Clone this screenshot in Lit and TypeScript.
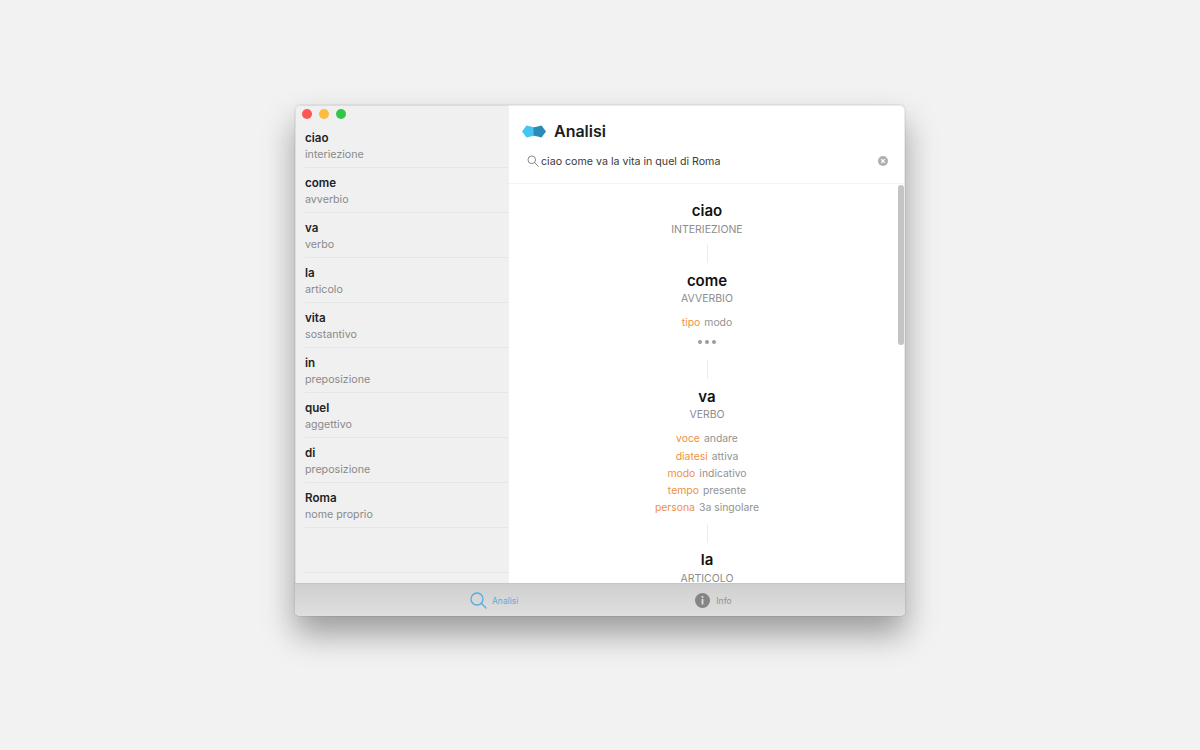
import { LitElement, html, css, svg } from "lit";
import { customElement } from "lit/decorators.js";

const words: [string, string][] = [
  ["ciao", "interiezione"],
  ["come", "avverbio"],
  ["va", "verbo"],
  ["la", "articolo"],
  ["vita", "sostantivo"],
  ["in", "preposizione"],
  ["quel", "aggettivo"],
  ["di", "preposizione"],
  ["Roma", "nome proprio"],
];

interface Entry { word: string; type: string; attrs: [string, string][]; more?: boolean; }
const entries: Entry[] = [
  { word: "ciao", type: "INTERIEZIONE", attrs: [] },
  { word: "come", type: "AVVERBIO", attrs: [["tipo", "modo"]], more: true },
  {
    word: "va",
    type: "VERBO",
    attrs: [
      ["voce", "andare"],
      ["diatesi", "attiva"],
      ["modo", "indicativo"],
      ["tempo", "presente"],
      ["persona", "3a singolare"],
    ],
  },
  { word: "la", type: "ARTICOLO", attrs: [] },
];

@customElement("app-root")
export class AppRoot extends LitElement {
  static styles = css`
    :host {
      display: block;
      width: 1200px;
      height: 750px;
      background: #f2f2f2;
      font-family: Inter, "Liberation Sans", sans-serif;
      overflow: hidden;
      padding-top: 105px;
      box-sizing: border-box;
    }
    .window {
      position: relative;
      width: 610px;
      height: 511px;
      margin: 0 auto;
      border-radius: 5px;
      overflow: hidden;
      display: flex;
      flex-direction: column;
      background: #fff;
    }
    .shadow {
      position: absolute;
      left: 295px;
      top: 105px;
      width: 610px;
      height: 511px;
      border-radius: 5px;
      box-shadow: 0 18px 32px rgba(0, 0, 0, 0.36), 0 0 1px rgba(0, 0, 0, 0.5);
    }
    .frame {
      position: absolute;
      inset: 0;
      border-radius: 5px;
      box-shadow: inset 0 0 0 1px rgba(0, 0, 0, 0.08);
      pointer-events: none;
    }
    .body { flex: 1; display: flex; min-height: 0; }
    .side {
      width: 214px;
      background: #f0f0f0;
      flex: none;
      padding-left: 10px;
      box-sizing: border-box;
      overflow: hidden;
    }
    .lights { display: flex; gap: 7px; padding-top: 4px; height: 14px; margin-left: -3px; }
    .lights i { width: 10px; height: 10px; border-radius: 50%; display: block; }
    .r { background: #fc5753; } .y { background: #fdbc40; } .g { background: #33c748; }
    .row {
      height: 45px;
      box-sizing: border-box;
      border-bottom: 1px solid #e6e6e6;
      padding-top: 7px;
    }
    .row b { display: block; font-size: 11.6px; line-height: 16px; font-weight: 600; color: #222; }
    .row span { display: block; font-size: 10.7px; line-height: 16px; margin-top: 1px; color: #8a8a8a; }
    .main { flex: 1; display: flex; flex-direction: column; position: relative; min-width: 0; }
    .head { height: 79px; flex: none; box-sizing: border-box; border-bottom: 1px solid #f3f3f3; padding: 16px 17px 0 13px; }
    .title { display: flex; align-items: center; gap: 8px; height: 20px; }
    .title svg { display: block; }
    .title h1 { margin: 0; font-size: 16px; line-height: 20px; font-weight: 600; color: #1c1c1c; }
    .search { display: flex; align-items: center; margin-top: 11px; padding-left: 5px; height: 18px; font-size: 10.65px; color: #3a3a3a; }
    .search span { flex: 1; margin-left: 2px; }
    .search svg { display: block; flex: none; }
    .list { flex: 1; overflow: hidden; display: flex; flex-direction: column; align-items: center; padding-top: 17px; min-height: 0; }
    .word { font-size: 15px; line-height: 20px; font-weight: 600; color: #111; text-align: center; }
    .type { font-size: 10.5px; line-height: 16px; color: #8c8c8c; text-align: center; }
    .type.low { margin-top: 0.5px; }
    .attrs { margin-top: 7px; }
    .attr { font-size: 10.4px; line-height: 17.3px; text-align: center; color: #929292; white-space: nowrap; }
    .attr em { font-style: normal; color: #ee8f45; margin-right: 4px; }
    .dots { display: flex; justify-content: center; gap: 3px; margin-top: 9px; height: 4px; }
    .dots i { display: block; width: 4px; height: 4px; border-radius: 50%; background: #9c9c9c; }
    .line { width: 1px; height: 19px; background: #ececec; margin: 6.5px 0 8px; flex: none; }
    .line.lg { margin-top: 16px; }
    .line.md { margin-top: 7px; margin-bottom: 7.5px; }
    .thumb { position: absolute; right: 1px; top: 80px; width: 6px; height: 160px; border-radius: 3px; background: #c4c4c4; }
    .tabs {
      height: 33px;
      flex: none;
      box-sizing: border-box;
      border-top: 1px solid #c6c6c6;
      background: linear-gradient(#cfcfcf, #dfdfdf);
      display: flex;
      align-items: center;
      position: relative;
      z-index: 1;
    }
    .tab { display: flex; align-items: center; gap: 5px; font-size: 8.5px; }
    .tab span { margin-top: 1px; }
    .tab.a { color: #55addf; margin-left: 175px; }
    .tab.b { color: #929292; margin-left: 177px; gap: 6px; }
    .tab.b svg { margin-top: 1px; }
    .tab svg { display: block; }
  `;

  private logo() {
    return svg`<svg width="24" height="13" viewBox="0 0 24 13">
      <path d="M0 6.500 L4.500 0.500 L13 2.500 V10.500 L4.500 12.500 Z" fill="#45c6f2"/>
      <path d="M11.500 2.500 L19.500 0.500 L24 6.500 L19.500 12.500 L11.500 10.500 Z" fill="#2a8ab8"/>
    </svg>`;
  }

  render() {
    return html`
      <div class="shadow"></div>
      <div class="window">
        <div class="body">
          <aside class="side">
            <div class="lights"><i class="r"></i><i class="y"></i><i class="g"></i></div>
            ${words.map(([w, t]) => html`<div class="row"><b>${w}</b><span>${t}</span></div>`)}
            <div class="row"></div>
          </aside>
          <main class="main">
            <header class="head">
              <div class="title">
                ${this.logo()}
                <h1>Analisi</h1>
              </div>
              <div class="search">
                <svg width="12" height="12" viewBox="0 0 12 12" fill="none" stroke="#8a8a8a" stroke-width="1">
                  <circle cx="4.800" cy="4.800" r="3.800"/><path d="M7.600 7.600 L11.300 11.300" stroke-linecap="round"/>
                </svg>
                <span>ciao come va la vita in quel di Roma</span>
                <svg width="10" height="10" viewBox="0 0 10 10">
                  <circle cx="5" cy="5" r="5" fill="#b0b0b0"/>
                  <path d="M3.200 3.200 L6.800 6.800 M6.800 3.200 L3.200 6.800" stroke="#fff" stroke-width="1.200"/>
                </svg>
              </div>
            </header>
            <section class="list">
              ${entries.map((e, i) => html`
                <div class="word">${e.word}</div>
                <div class="type ${e.attrs.length ? "" : "low"}">${e.type}</div>
                ${e.attrs.length ? html`<div class="attrs">${e.attrs.map(([k, v]) => html`<div class="attr"><em>${k}</em>${v}</div>`)}</div>` : ""}
                ${e.more ? html`<div class="dots"><i></i><i></i><i></i></div>` : ""}
                ${i < entries.length - 1 ? html`<div class="line ${e.more ? "lg" : e.attrs.length ? "md" : ""}"></div>` : ""}
              `)}
            </section>
            <div class="thumb"></div>
          </main>
        </div>
        <footer class="tabs">
          <div class="tab a">
            <svg width="17" height="17" viewBox="0 0 17 17" fill="none" stroke="#55addf" stroke-width="1.300">
              <circle cx="7" cy="7" r="6"/><path d="M11.300 11.300 L16 16" stroke-linecap="round"/>
            </svg>
            <span>Analisi</span>
          </div>
          <div class="tab b">
            <svg width="15" height="15" viewBox="0 0 15 15">
              <circle cx="7.500" cy="7.500" r="7.500" fill="#858585"/>
              <circle cx="7.500" cy="4" r="1.100" fill="#ddd"/>
              <rect x="6.600" y="6" width="1.800" height="5.500" fill="#ddd"/>
            </svg>
            <span>Info</span>
          </div>
        </footer>
        <div class="frame"></div>
      </div>
    `;
  }
}
